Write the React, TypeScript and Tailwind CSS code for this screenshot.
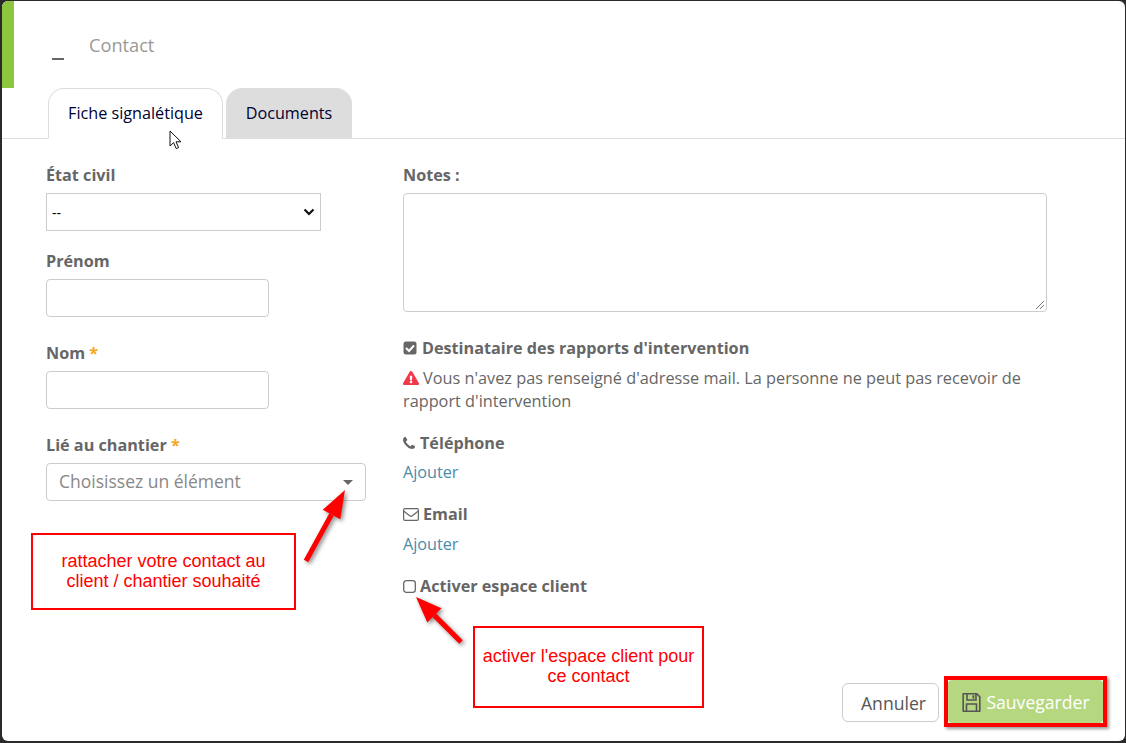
import React from "react";
import { FaExclamationTriangle } from "react-icons/fa";

const label = "text-[16.2px] leading-[24px] font-bold text-[#666666]";
const input = "block h-[38px] bg-white border border-[#cccccc] rounded-[4px]";
const annotation = "absolute border-2 border-[#ff0000] bg-white flex items-center justify-center pb-[2px] text-center text-[18px] leading-[20px] text-[#ff0000]";

function Arrow({ className, x1, y1, x2, y2, w, h, L, W }: { className: string; x1: number; y1: number; x2: number; y2: number; w: number; h: number; L: number; W: number }) {
  const a = Math.atan2(y2 - y1, x2 - x1);
  const bx = x2 - L * Math.cos(a), by = y2 - L * Math.sin(a);
  const nx = -Math.sin(a), ny = Math.cos(a);
  const pts = `${x2},${y2} ${bx + nx * W},${by + ny * W} ${bx - nx * W},${by - ny * W}`;
  return (
    <svg className={`${className} drop-shadow-[2px_2px_2px_rgba(0,0,0,0.45)]`} width={w} height={h} viewBox={`0 0 ${w} ${h}`}>
      <line x1={x1} y1={y1} x2={bx} y2={by} stroke="#ff0000" strokeWidth="5" />
      <polygon points={pts} fill="#ff0000" />
    </svg>
  );
}

export default function App() {
  return (
    <div className="w-[1126px] h-[743px] bg-[#2a2a2a] pt-px pr-px pb-[2px] pl-[2px] overflow-hidden" style={{ fontFamily: "'Open Sans', sans-serif" }}>
      <div className="relative w-full h-full bg-white rounded-[6px] overflow-hidden flex flex-col">
        <header className="h-[88px] shrink-0 flex">
          <div className="w-[12px] h-[87px] bg-[#8cc63f]" />
          <div className="w-[38px] pl-[38px] pt-[57px]">
            <div className="w-[12px] h-[2px] bg-[#666666]" />
          </div>
          <h1 className="ml-[37px] mt-[31px] text-[18.2px] leading-[27px] font-normal text-[#999999]">Contact</h1>
        </header>

        <nav className="h-[50px] shrink-0 flex items-end gap-[3px] pl-[46px] border-b border-[#dddddd]">
          <div className="relative h-[51px] -mb-px w-[175px] bg-white border border-[#dddddd] border-b-white rounded-t-[16px] flex items-center justify-center text-[16.2px] text-[#000033]">
            Fiche signalétique
            <svg className="absolute left-[120px] top-[41px]" width="14" height="20" viewBox="0 0 14 20">
              <path d="M1 1v15l3.6-3.4 2.6 6 2.4-1-2.6-5.8H12z" fill="#fff" stroke="#111" strokeWidth="1" strokeLinejoin="round" />
            </svg>
          </div>
          <div className="h-[50px] w-[126px] bg-[#dddddd] rounded-t-[16px] flex items-center justify-center text-[16.2px] text-[#000033]">Documents</div>
        </nav>

        <main className="flex-1 flex pl-[44px] pt-[24px]">
          <section className="w-[357px] shrink-0 flex flex-col">
            <label className={label}>État civil</label>
            <div className="mt-[6px] w-[275px] h-[38px] border border-[#cccccc] flex items-center justify-between pl-[5px] pr-[5px] text-[14px] text-black">
              <span>--</span>
              <svg width="12" height="8" viewBox="0 0 12 8"><path d="M1.5 1.5 6 6l4.5-4.5" fill="none" stroke="#111" strokeWidth="2.2" /></svg>
            </div>
            <label className={`${label} mt-[18px]`}>Prénom</label>
            <div className={`${input} mt-[6px] w-[223px]`} />
            <label className={`${label} mt-[24px]`}>Nom <span className="text-[#f5a623]">*</span></label>
            <div className={`${input} mt-[6px] w-[223px]`} />
            <label className={`${label} mt-[24px]`}>Lié au chantier <span className="text-[#f5a623]">*</span></label>
            <div className={`${input} mt-[6px] w-[320px] flex items-center justify-between pl-[12px] pr-[12px] text-[17.5px] text-[#888888]`}>
              <span className="-mt-[2px]">Choisissez un élément</span>
              <span className="w-0 h-0 border-x-[5px] border-x-transparent border-t-[5px] border-t-[#666666]" />
            </div>
          </section>

          <section className="w-[644px] shrink-0 flex flex-col text-[#666666]">
            <label className={label}>Notes :</label>
            <div className="relative mt-[6px] h-[119px] border border-[#cccccc] rounded-[4px]">
              <svg className="absolute right-[1px] bottom-[1px]" width="11" height="11" viewBox="0 0 11 11"><path d="M10 2 2 10M10 6 6 10" stroke="#777" strokeWidth="1" /></svg>
            </div>
            <div className={`${label} mt-[24px] flex items-center gap-[5px]`}>
              <svg width="14" height="14" viewBox="0 0 14 14"><rect width="13" height="13" x="0.5" y="0.5" rx="2.5" fill="#666" /><path d="M3 7l3 3 5-5.5" fill="none" stroke="#fff" strokeWidth="2" /></svg>
              Destinataire des rapports d'intervention
            </div>
            <p className="mt-[7px] text-[16.3px] leading-[23px] w-[630px]">
              <FaExclamationTriangle className="inline text-[#f0384a] text-[16px] align-[-2px] mr-[4px]" />Vous n'avez pas renseigné d'adresse mail. La personne ne peut pas recevoir de rapport d'intervention
            </p>
            <div className={`${label} mt-[18px] flex items-center gap-[5px]`}>
              <svg width="12" height="12" viewBox="0 0 1408 1408" fill="#666"><path d="M1408 1112q0 27-10 70.5t-21 68.5q-21 50-122 106-94 51-186 51-27 0-53-3.5t-57.5-12.5-47-14.5-55.5-20.5-49-18q-98-35-175-83-127-79-264-216t-216-264q-48-77-83-175-3-9-18-49t-20.5-55.5-14.5-47-12.5-57.5-3.5-53q0-92 51-186 56-101 106-122 25-11 68.5-21t70.5-10q14 0 21 3 18 6 53 76 11 19 30 54t35 63.5 31 53.5q3 4 17.5 25t21.5 35.5 7 28.5q0 20-28.5 50t-62 55-62 53-28.5 46q0 9 5 22.5t8.5 20.5 14 24 11.5 19q76 137 174 235t235 174q2 1 19 11.5t24 14 20.5 8.5 22.5 5q18 0 46-28.5t53-62 55-62 50-28.5q14 0 28.5 7t35.5 21.5 25 17.5q25 15 53.5 31t63.5 35 54 30q70 35 76 53 3 7 3 21z" /></svg>
              Téléphone
            </div>
            <a className="mt-[5px] text-[16.2px] leading-[24px] text-[#4a8cab]">Ajouter</a>
            <div className={`${label} mt-[18px] flex items-center gap-[4px]`}>
              <svg width="16" height="13" viewBox="0 0 16 13" fill="none" stroke="#666" strokeWidth="1.2"><rect x="0.6" y="0.6" width="14.8" height="11.8" rx="1.4" /><path d="M1 3.2 6.6 7.8c.8.6 2 .6 2.8 0L15 3.2" /></svg>
              Email
            </div>
            <a className="mt-[6px] text-[16.2px] leading-[24px] text-[#4a8cab]">Ajouter</a>
            <div className={`${label} mt-[18px] flex items-center gap-[4px]`}>
              <svg width="13" height="13" viewBox="0 0 13 13"><rect x="0.7" y="0.7" width="11.6" height="11.6" rx="2.6" fill="none" stroke="#666" strokeWidth="1.3" /></svg>
              Activer espace client
            </div>
          </section>
        </main>

        <footer className="h-[74px] shrink-0 flex justify-end items-start pr-[22px] gap-[9px] pt-[16px]">
          <button className="w-[97px] h-[39px] border border-[#cccccc] rounded-[6px] bg-white pl-[6px] pt-[2px] text-[17.6px] text-[#555555]">Annuler</button>
          <div className="-mt-[7px] -mx-[4px] border-[4px] border-[#ff0000] shadow-[2px_2px_3px_rgba(0,0,0,0.4)]">
            <button className="w-[155px] h-[43px] bg-[#b5d77f] rounded-[4px] pt-[1px] text-[17.6px] text-white flex items-center justify-center gap-[4px]">
              <svg width="21" height="21" viewBox="0 0 21 21" fill="none" stroke="#555" strokeWidth="1.6"><path d="M2.2 1.8h13.6l3 3v14.4H2.2z" strokeLinejoin="round" /><path d="M6 2v6h9V2" /><path d="M5.5 19v-7h10v7" /><rect x="11.5" y="3.2" width="1.8" height="3.4" fill="#555" stroke="none" /></svg>
              Sauvegarder
            </button>
          </div>
        </footer>

        <div className={`${annotation} left-[29px] top-[532px] w-[265px] h-[77px]`} style={{ fontFamily: "'Liberation Sans', sans-serif" }}>
          <span>rattacher votre contact au<br />client / chantier souhaité</span>
        </div>
        <div className={`${annotation} left-[471px] top-[625px] w-[231px] h-[82px]`} style={{ fontFamily: "'Liberation Sans', sans-serif" }}>
          <span>activer l'espace client pour<br />ce contact</span>
        </div>
        <Arrow className="absolute left-[290px] top-[480px]" x1={14} y1={80} x2={53} y2={9} w={70} h={95} L={28} W={10} />
        <Arrow className="absolute left-[405px] top-[590px]" x1={54} y1={51} x2={9} y2={6} w={70} h={65} L={26} W={10} />
      </div>
    </div>
  );
}
